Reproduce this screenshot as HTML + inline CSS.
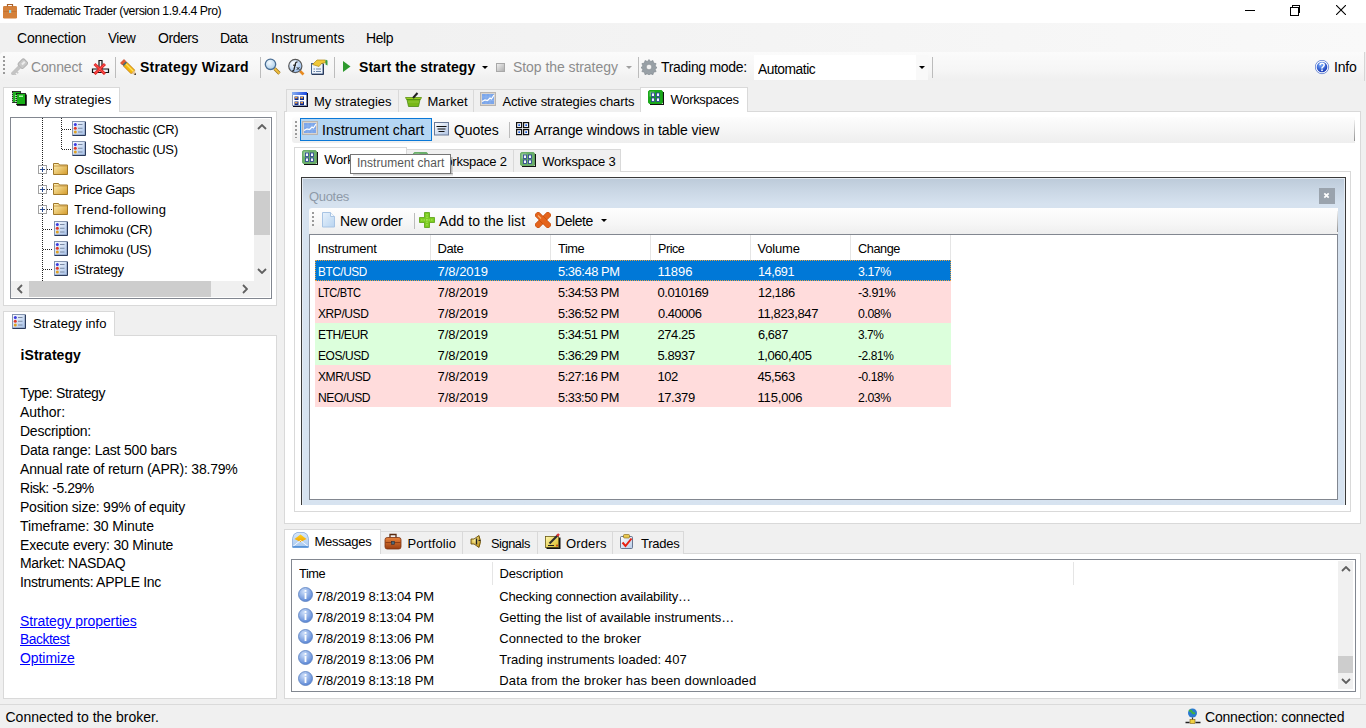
<!DOCTYPE html>
<html><head><meta charset="utf-8">
<style>
*{box-sizing:border-box;margin:0;padding:0}
html,body{width:1366px;height:728px;overflow:hidden;background:#f0f0f0;font-family:"Liberation Sans",sans-serif;color:#000}
.a{position:absolute}
.t{position:absolute;white-space:nowrap;font-size:14px;letter-spacing:-0.2px;line-height:20px}
.b{font-weight:bold;letter-spacing:-0.1px}
.g{color:#8d8d8d}
.w{color:#fff}
.pan{position:absolute;background:#fff;border:1px solid #d9d9d9}
.tab{position:absolute;background:#f0f0f0;border:1px solid #d9d9d9;border-bottom:none}
.tabA{position:absolute;background:#fff;border:1px solid #d9d9d9;border-bottom:none}
.sep{position:absolute;width:1px;background:#bcbcbc}
.grid{position:absolute;background:#fff;border:1px solid #828790}
.lnk{color:#0000ff;text-decoration:underline}
.grip{position:absolute;width:2px;background:repeating-linear-gradient(#9a9a9a 0 2px,transparent 2px 4px)}
</style></head><body>
<div class="a" style="left:0px;top:0px;width:1366px;height:23px;background:#fff"></div>
<svg class="a" style="left:3px;top:3px" width="15" height="16" viewBox="0 0 15 16"><rect x="0" y="3" width="14" height="12.5" rx="1.3" fill="#d4803a"/><path d="M4.5 3.5V1.5h5v2" stroke="#a8602a" stroke-width="1.2" fill="none"/><path d="M0.5 8.5h13" stroke="#b86a2a" stroke-width="0.8" opacity="0.7"/><rect x="6" y="7" width="2.2" height="3" fill="#9ad4e0"/></svg>
<div class="t" style="left:23.6px;top:1px;font-size:12.3px;letter-spacing:-0.45px;transform:scaleX(0.9995);transform-origin:0.0px 0;">Tradematic Trader (version 1.9.4.4 Pro)</div>
<div class="a" style="left:1245px;top:10px;width:10px;height:1px;background:#000"></div>
<div class="a" style="left:1292px;top:5px;width:8px;height:8px;border:1px solid #000"></div>
<div class="a" style="left:1290px;top:7px;width:9px;height:9px;border:1px solid #000;background:#fff"></div>
<svg class="a" style="left:1336px;top:5px" width="10" height="10" viewBox="0 0 10 10"><path d="M0 0L10 10M10 0L0 10" stroke="#000" stroke-width="1.1"/></svg>
<div class="a" style="left:0px;top:23px;width:1366px;height:29px;background:linear-gradient(90deg,#f0f0f0 0%,#f1f1f1 30%,#f9f9f9 100%)"></div>
<div class="t" style="left:17.0px;top:28px;font-size:14px;letter-spacing:-0.20px;">Connection</div>
<div class="t" style="left:108.0px;top:28px;font-size:14px;letter-spacing:-0.45px;transform:scaleX(0.9680);transform-origin:0.0px 0;">View</div>
<div class="t" style="left:158.0px;top:28px;font-size:14px;letter-spacing:-0.45px;transform:scaleX(0.9988);transform-origin:0.0px 0;">Orders</div>
<div class="t" style="left:220.0px;top:28px;font-size:14px;letter-spacing:-0.45px;transform:scaleX(0.9948);transform-origin:0.0px 0;">Data</div>
<div class="t" style="left:271.0px;top:28px;font-size:14px;letter-spacing:0.03px;">Instruments</div>
<div class="t" style="left:366.0px;top:28px;font-size:14px;letter-spacing:-0.40px;">Help</div>
<div class="a" style="left:0px;top:52px;width:1365px;height:29px;background:linear-gradient(#fbfbfb,#f6f6f6 60%,#efefef);border-radius:4px 0 0 4px"></div>
<div class="a" style="left:1364px;top:52px;width:1px;height:29px;background:#d6d6d6"></div>
<div class="grip" style="left:3px;top:56px;height:20px"></div>
<svg class="a" style="left:11px;top:58px" width="17" height="17" viewBox="0 0 17 17"><g transform="rotate(45 12 5.5)"><rect x="8.5" y="1.5" width="7" height="8.5" rx="2" fill="#c8c8c8" stroke="#b0b0b0"/><rect x="11" y="3" width="2" height="4" fill="#ececec"/><rect x="10.5" y="10" width="3" height="11" fill="#c4c4c4" stroke="#b4b4b4" stroke-width="0.6"/><rect x="13.5" y="15" width="2" height="1.6" fill="#c4c4c4"/><rect x="13.5" y="18" width="2" height="1.6" fill="#c4c4c4"/></g></svg>
<div class="t g" style="left:31.0px;top:57px;font-size:14px;letter-spacing:-0.17px;">Connect</div>
<svg class="a" style="left:91px;top:59px" width="19" height="16" viewBox="0 0 19 16"><path d="M1.5 10h16v3.5h-16z" fill="#e8eef2" stroke="#111" stroke-width="1.2"/><path d="M8 1.5h3v8.5h-3z" fill="#f4f4f4" stroke="#111" stroke-width="1.2"/><path d="M3.5 5L14 15M14 5L3.5 15" stroke="#e02828" stroke-width="3"/><path d="M4 5.5L13.5 14.5M13.5 5.5L4 14.5" stroke="#ff5a50" stroke-width="1"/></svg>
<div class="sep" style="left:115px;top:57px;height:21px"></div>
<svg class="a" style="left:119px;top:58px" width="18" height="18" viewBox="0 0 18 18"><path d="M7.8 4.2L4.2 7.8L12.2 15.8L15.8 12.2z" fill="#f2b80c" stroke="#c07000" stroke-width="0.8"/><path d="M6.5 5.5L14.5 13.5" stroke="#ffe060" stroke-width="1.2"/><path d="M5 1.5L1.5 5L3.5 7L7 3.5z" fill="#e85a30" stroke="#b83010" stroke-width="0.6"/><path d="M6.8 3.6L3.6 6.8L4.8 8L8 4.8z" fill="#4a6a70"/><path d="M12.2 15.8L17 17L15.8 12.2z" fill="#e8c898"/><path d="M15 16.5L17 17L16.5 15z" fill="#111"/></svg>
<div class="t b" style="left:140.0px;top:57px;font-size:14px;letter-spacing:0.21px;">Strategy Wizard</div>
<div class="sep" style="left:260px;top:57px;height:21px"></div>
<svg class="a" style="left:264px;top:58px" width="18" height="17" viewBox="0 0 18 17"><defs><radialGradient id="gm" cx="0.4" cy="0.35" r="0.7"><stop offset="0" stop-color="#f4faff"/><stop offset="1" stop-color="#a8cce8"/></radialGradient></defs><path d="M10.5 10.5L15.5 15.5" stroke="#9a7018" stroke-width="3.2"/><path d="M10.5 10.5L15.5 15.5" stroke="#f0c040" stroke-width="1.8"/><circle cx="6.5" cy="6.3" r="5.2" fill="url(#gm)" stroke="#4a6e94" stroke-width="1.3"/></svg>
<svg class="a" style="left:287px;top:58px" width="18" height="18" viewBox="0 0 18 18"><defs><radialGradient id="gx" cx="0.35" cy="0.3" r="0.8"><stop offset="0" stop-color="#ffffff"/><stop offset="1" stop-color="#8ab4ea"/></radialGradient></defs><path d="M13 13L16.5 16.5" stroke="#e88a20" stroke-width="2.6"/><circle cx="8.3" cy="8" r="6.6" fill="url(#gx)" stroke="#5a5a5a" stroke-width="1.2"/><path d="M10.5 4.2q-1.5-.6-2 1.2l-1.6 6.5q-.4 1.4-1.8 1" stroke="#222" stroke-width="1.3" fill="none"/><path d="M6 7.2h3" stroke="#222" stroke-width="1"/><path d="M9.8 9.2l2.6 2.6M12.4 9.2l-2.6 2.6" stroke="#222" stroke-width="1"/></svg>
<svg class="a" style="left:310px;top:58px" width="18" height="18" viewBox="0 0 18 18"><rect x="1.5" y="5.5" width="11.5" height="10.5" fill="#eef4fb" stroke="#45618a" stroke-width="1"/><path d="M2 16.5h11.5V6" stroke="#2a3a5a" stroke-width="1" fill="none"/><path d="M3.5 11h1.5M6 11h5M3.5 13.5h1.5M6 13.5h5" stroke="#7088aa" stroke-width="1"/><path d="M2.5 6.5L7 2h8l1 2.5l-4.5 1L9 8.5z" fill="#f0c838" stroke="#b08a18" stroke-width="0.7"/><path d="M15.5 1.5l2 1v5l-2-1z" fill="#3aa040"/></svg>
<div class="sep" style="left:334px;top:57px;height:21px"></div>
<svg class="a" style="left:343px;top:61px" width="8" height="12" viewBox="0 0 8 12"><path d="M0 0L7.5 5.5L0 11Z" fill="#2e9a2e"/></svg>
<div class="t b" style="left:359.0px;top:57px;font-size:14px;letter-spacing:0.06px;">Start the strategy</div>
<svg class="a" style="left:482px;top:66px" width="6" height="4" viewBox="0 0 6 4"><path d="M0 0h6L3 3Z" fill="#000"/></svg>
<div class="a" style="left:496px;top:63px;width:9px;height:9px;background:linear-gradient(135deg,#eee,#b0b0b0);border:1px solid #a8a8a8"></div>
<div class="t g" style="left:513.0px;top:57px;font-size:14px;letter-spacing:-0.06px;">Stop the strategy</div>
<svg class="a" style="left:626px;top:66px" width="6" height="4" viewBox="0 0 6 4"><path d="M0 0h6L3 3Z" fill="#a0a0a0"/></svg>
<div class="sep" style="left:638px;top:57px;height:21px"></div>
<svg class="a" style="left:641px;top:59px" width="16" height="16" viewBox="0 0 16 16"><path d="M8 0.5l1.6 2 2.4-1 .6 2.5 2.5.6-1 2.4 2 1.6-2 1.6 1 2.4-2.5.6-.6 2.5-2.4-1-1.6 2-1.6-2-2.4 1-.6-2.5-2.5-.6 1-2.4-2-1.6 2-1.6-1-2.4 2.5-.6.6-2.5 2.4 1z" fill="#98a0a6" stroke="#7d858b" stroke-width="0.6"/><circle cx="8" cy="8" r="2.8" fill="#f2f2f2" stroke="#7d858b" stroke-width="0.6"/></svg>
<div class="t" style="left:661.0px;top:57px;font-size:14px;letter-spacing:-0.30px;">Trading mode:</div>
<div class="a" style="left:754px;top:55px;width:174px;height:25px;background:#fff"></div>
<div class="a" style="left:916px;top:55px;width:12px;height:25px;background:#f9f9f9"></div>
<svg class="a" style="left:919px;top:66px" width="6" height="4" viewBox="0 0 6 4"><path d="M0 0h6L3 3Z" fill="#000"/></svg>
<div class="t" style="left:758.0px;top:59px;font-size:14px;letter-spacing:-0.45px;transform:scaleX(0.9846);transform-origin:0.0px 0;">Automatic</div>
<div class="sep" style="left:932px;top:57px;height:21px"></div>
<svg class="a" style="left:1315px;top:60px" width="15" height="15" viewBox="0 0 15 15"><defs><radialGradient id="gq2" cx="0.4" cy="0.3" r="0.75"><stop offset="0" stop-color="#7ab0ff"/><stop offset="1" stop-color="#1030b0"/></radialGradient></defs><circle cx="7" cy="7" r="6.7" fill="#fff" stroke="#3a62c8" stroke-width="0.7"/><circle cx="7" cy="7" r="5.3" fill="url(#gq2)"/><path d="M5 5.2q0-2 2.1-2t2.1 1.9q0 1.1-1.2 1.7t-1 1.8" stroke="#fff" stroke-width="1.5" fill="none"/><rect x="6.2" y="9.5" width="1.6" height="1.6" fill="#fff"/></svg>
<div class="t" style="left:1334.0px;top:57px;font-size:14px;letter-spacing:-0.23px;">Info</div>
<div class="pan" style="left:3px;top:111px;width:274px;height:195px"></div>
<div class="tabA" style="left:3px;top:87px;width:117px;height:25px"></div>
<svg class="a" style="left:11px;top:91px" width="16" height="15" viewBox="0 0 16 15"><rect x="1.5" y="0.5" width="8" height="11" fill="#22b022" stroke="#111" stroke-width="0.8"/><rect x="5.5" y="2.5" width="9" height="11" fill="#18b018" stroke="#111" stroke-width="0.8"/><path d="M15 3.5v10.5h-9" stroke="#000" stroke-width="1.5" fill="none"/><path d="M1 2v9M5 4v9" stroke="#fff" stroke-width="1.2" stroke-dasharray="1 1"/><rect x="8" y="4.5" width="4" height="1.5" fill="#a8f0a8"/></svg>
<div class="t" style="left:33.6px;top:90px;font-size:13px;letter-spacing:0.02px;">My strategies</div>
<div class="grid" style="left:10px;top:117px;width:262px;height:182px"></div>
<div class="a" style="left:42px;top:118px;width:1px;height:163px;background:repeating-linear-gradient(#222 0 1px,transparent 1px 2px)"></div>
<div class="a" style="left:61px;top:118px;width:1px;height:32px;background:repeating-linear-gradient(#222 0 1px,transparent 1px 2px)"></div>
<div class="a" style="left:62px;top:129px;width:10px;height:1px;background:repeating-linear-gradient(90deg,#222 0 1px,transparent 1px 2px)"></div>
<div class="a" style="left:62px;top:149px;width:10px;height:1px;background:repeating-linear-gradient(90deg,#222 0 1px,transparent 1px 2px)"></div>
<div class="a" style="left:47px;top:169px;width:6px;height:1px;background:repeating-linear-gradient(90deg,#222 0 1px,transparent 1px 2px)"></div>
<div class="a" style="left:47px;top:189px;width:6px;height:1px;background:repeating-linear-gradient(90deg,#222 0 1px,transparent 1px 2px)"></div>
<div class="a" style="left:47px;top:209px;width:6px;height:1px;background:repeating-linear-gradient(90deg,#222 0 1px,transparent 1px 2px)"></div>
<div class="a" style="left:43px;top:229px;width:10px;height:1px;background:repeating-linear-gradient(90deg,#222 0 1px,transparent 1px 2px)"></div>
<div class="a" style="left:43px;top:249px;width:10px;height:1px;background:repeating-linear-gradient(90deg,#222 0 1px,transparent 1px 2px)"></div>
<div class="a" style="left:43px;top:269px;width:10px;height:1px;background:repeating-linear-gradient(90deg,#222 0 1px,transparent 1px 2px)"></div>
<svg class="a" style="left:38px;top:165px" width="9" height="9" viewBox="0 0 9 9"><rect x="0.5" y="0.5" width="8" height="8" fill="#fff" stroke="#a0a0a0"/><path d="M2 4.5h5M4.5 2v5" stroke="#2a4a8a" stroke-width="1"/></svg>
<svg class="a" style="left:53px;top:162px" width="16" height="13" viewBox="0 0 16 13"><defs><linearGradient id="gf" x1="0" y1="0" x2="1" y2="1"><stop offset="0" stop-color="#fff2b8"/><stop offset="1" stop-color="#d49a28"/></linearGradient></defs><path d="M0.5 1.5h5l1 1.5h8v9.5h-14z" fill="url(#gf)" stroke="#a0782a" stroke-width="1"/><path d="M0.5 4h14" stroke="#c09040" stroke-width="0.8"/></svg>
<svg class="a" style="left:38px;top:185px" width="9" height="9" viewBox="0 0 9 9"><rect x="0.5" y="0.5" width="8" height="8" fill="#fff" stroke="#a0a0a0"/><path d="M2 4.5h5M4.5 2v5" stroke="#2a4a8a" stroke-width="1"/></svg>
<svg class="a" style="left:53px;top:182px" width="16" height="13" viewBox="0 0 16 13"><defs><linearGradient id="gf" x1="0" y1="0" x2="1" y2="1"><stop offset="0" stop-color="#fff2b8"/><stop offset="1" stop-color="#d49a28"/></linearGradient></defs><path d="M0.5 1.5h5l1 1.5h8v9.5h-14z" fill="url(#gf)" stroke="#a0782a" stroke-width="1"/><path d="M0.5 4h14" stroke="#c09040" stroke-width="0.8"/></svg>
<svg class="a" style="left:38px;top:205px" width="9" height="9" viewBox="0 0 9 9"><rect x="0.5" y="0.5" width="8" height="8" fill="#fff" stroke="#a0a0a0"/><path d="M2 4.5h5M4.5 2v5" stroke="#2a4a8a" stroke-width="1"/></svg>
<svg class="a" style="left:53px;top:202px" width="16" height="13" viewBox="0 0 16 13"><defs><linearGradient id="gf" x1="0" y1="0" x2="1" y2="1"><stop offset="0" stop-color="#fff2b8"/><stop offset="1" stop-color="#d49a28"/></linearGradient></defs><path d="M0.5 1.5h5l1 1.5h8v9.5h-14z" fill="url(#gf)" stroke="#a0782a" stroke-width="1"/><path d="M0.5 4h14" stroke="#c09040" stroke-width="0.8"/></svg>
<svg class="a" style="left:72px;top:121px" width="14" height="15" viewBox="0 0 14 15"><defs><linearGradient id="gs" x1="0" y1="0" x2="1" y2="1"><stop offset="0" stop-color="#fff"/><stop offset="1" stop-color="#a4bfe8"/></linearGradient></defs><rect x="0.5" y="0.5" width="12.5" height="13.5" fill="url(#gs)" stroke="#8494b0"/><path d="M0.5 14.5H13.5V0.8" stroke="#2a3a5c" stroke-width="1" fill="none"/><circle cx="3.3" cy="3.5" r="1.5" fill="#3a3ae0"/><circle cx="3.3" cy="7.3" r="1.5" fill="#e03a2a"/><circle cx="3.3" cy="11" r="1.5" fill="#e0a020"/><path d="M6 3.5h4.5M6 7.3h4.5M6 11h4.5" stroke="#7a8aa4" stroke-width="1.1"/></svg>
<svg class="a" style="left:72px;top:141px" width="14" height="15" viewBox="0 0 14 15"><defs><linearGradient id="gs" x1="0" y1="0" x2="1" y2="1"><stop offset="0" stop-color="#fff"/><stop offset="1" stop-color="#a4bfe8"/></linearGradient></defs><rect x="0.5" y="0.5" width="12.5" height="13.5" fill="url(#gs)" stroke="#8494b0"/><path d="M0.5 14.5H13.5V0.8" stroke="#2a3a5c" stroke-width="1" fill="none"/><circle cx="3.3" cy="3.5" r="1.5" fill="#3a3ae0"/><circle cx="3.3" cy="7.3" r="1.5" fill="#e03a2a"/><circle cx="3.3" cy="11" r="1.5" fill="#e0a020"/><path d="M6 3.5h4.5M6 7.3h4.5M6 11h4.5" stroke="#7a8aa4" stroke-width="1.1"/></svg>
<svg class="a" style="left:54px;top:221px" width="14" height="15" viewBox="0 0 14 15"><defs><linearGradient id="gs" x1="0" y1="0" x2="1" y2="1"><stop offset="0" stop-color="#fff"/><stop offset="1" stop-color="#a4bfe8"/></linearGradient></defs><rect x="0.5" y="0.5" width="12.5" height="13.5" fill="url(#gs)" stroke="#8494b0"/><path d="M0.5 14.5H13.5V0.8" stroke="#2a3a5c" stroke-width="1" fill="none"/><circle cx="3.3" cy="3.5" r="1.5" fill="#3a3ae0"/><circle cx="3.3" cy="7.3" r="1.5" fill="#e03a2a"/><circle cx="3.3" cy="11" r="1.5" fill="#e0a020"/><path d="M6 3.5h4.5M6 7.3h4.5M6 11h4.5" stroke="#7a8aa4" stroke-width="1.1"/></svg>
<svg class="a" style="left:54px;top:241px" width="14" height="15" viewBox="0 0 14 15"><defs><linearGradient id="gs" x1="0" y1="0" x2="1" y2="1"><stop offset="0" stop-color="#fff"/><stop offset="1" stop-color="#a4bfe8"/></linearGradient></defs><rect x="0.5" y="0.5" width="12.5" height="13.5" fill="url(#gs)" stroke="#8494b0"/><path d="M0.5 14.5H13.5V0.8" stroke="#2a3a5c" stroke-width="1" fill="none"/><circle cx="3.3" cy="3.5" r="1.5" fill="#3a3ae0"/><circle cx="3.3" cy="7.3" r="1.5" fill="#e03a2a"/><circle cx="3.3" cy="11" r="1.5" fill="#e0a020"/><path d="M6 3.5h4.5M6 7.3h4.5M6 11h4.5" stroke="#7a8aa4" stroke-width="1.1"/></svg>
<svg class="a" style="left:54px;top:261px" width="14" height="15" viewBox="0 0 14 15"><defs><linearGradient id="gs" x1="0" y1="0" x2="1" y2="1"><stop offset="0" stop-color="#fff"/><stop offset="1" stop-color="#a4bfe8"/></linearGradient></defs><rect x="0.5" y="0.5" width="12.5" height="13.5" fill="url(#gs)" stroke="#8494b0"/><path d="M0.5 14.5H13.5V0.8" stroke="#2a3a5c" stroke-width="1" fill="none"/><circle cx="3.3" cy="3.5" r="1.5" fill="#3a3ae0"/><circle cx="3.3" cy="7.3" r="1.5" fill="#e03a2a"/><circle cx="3.3" cy="11" r="1.5" fill="#e0a020"/><path d="M6 3.5h4.5M6 7.3h4.5M6 11h4.5" stroke="#7a8aa4" stroke-width="1.1"/></svg>
<div class="t" style="left:93.0px;top:120px;font-size:13px;letter-spacing:-0.38px;">Stochastic (CR)</div>
<div class="t" style="left:93.0px;top:140px;font-size:13px;letter-spacing:-0.38px;">Stochastic (US)</div>
<div class="t" style="left:74.3px;top:160px;font-size:13px;letter-spacing:-0.06px;">Oscillators</div>
<div class="t" style="left:74.3px;top:180px;font-size:13px;letter-spacing:-0.39px;">Price Gaps</div>
<div class="t" style="left:74.3px;top:200px;font-size:13px;letter-spacing:0.23px;">Trend-following</div>
<div class="t" style="left:74.3px;top:220px;font-size:13px;letter-spacing:-0.42px;">Ichimoku (CR)</div>
<div class="t" style="left:74.3px;top:240px;font-size:13px;letter-spacing:-0.42px;">Ichimoku (US)</div>
<div class="t" style="left:74.3px;top:260px;font-size:13px;letter-spacing:-0.19px;">iStrategy</div>
<div class="a" style="left:254px;top:119px;width:16px;height:162px;background:#f0f0f0"></div>
<div class="a" style="left:254px;top:191px;width:16px;height:44px;background:#cdcdcd"></div>
<div class="a" style="left:11px;top:281px;width:259px;height:16px;background:#f0f0f0"></div>
<div class="a" style="left:29px;top:281px;width:182px;height:16px;background:#cdcdcd"></div>
<svg class="a" style="left:257px;top:124px" width="10" height="6" viewBox="0 0 10 6"><path d="M1 5L5 1L9 5" stroke="#606060" stroke-width="1.8" fill="none"/></svg>
<svg class="a" style="left:257px;top:268px" width="10" height="6" viewBox="0 0 10 6"><path d="M1 1L5 5L9 1" stroke="#606060" stroke-width="1.8" fill="none"/></svg>
<svg class="a" style="left:17px;top:284px" width="6" height="10" viewBox="0 0 6 10"><path d="M5 1L1 5L5 9" stroke="#606060" stroke-width="1.8" fill="none"/></svg>
<svg class="a" style="left:242px;top:284px" width="6" height="10" viewBox="0 0 6 10"><path d="M1 1L5 5L1 9" stroke="#606060" stroke-width="1.8" fill="none"/></svg>
<div class="pan" style="left:3px;top:335px;width:274px;height:364px"></div>
<div class="tabA" style="left:3px;top:311px;width:112px;height:25px"></div>
<svg class="a" style="left:12px;top:314px" width="14" height="15" viewBox="0 0 14 15"><defs><linearGradient id="gs" x1="0" y1="0" x2="1" y2="1"><stop offset="0" stop-color="#fff"/><stop offset="1" stop-color="#a4bfe8"/></linearGradient></defs><rect x="0.5" y="0.5" width="12.5" height="13.5" fill="url(#gs)" stroke="#8494b0"/><path d="M0.5 14.5H13.5V0.8" stroke="#2a3a5c" stroke-width="1" fill="none"/><circle cx="3.3" cy="3.5" r="1.5" fill="#3a3ae0"/><circle cx="3.3" cy="7.3" r="1.5" fill="#e03a2a"/><circle cx="3.3" cy="11" r="1.5" fill="#e0a020"/><path d="M6 3.5h4.5M6 7.3h4.5M6 11h4.5" stroke="#7a8aa4" stroke-width="1.1"/></svg>
<div class="t" style="left:33.0px;top:314px;font-size:13px;letter-spacing:0.04px;">Strategy info</div>
<div class="t b" style="left:20.6px;top:345px;font-size:14px;letter-spacing:0.04px;">iStrategy</div>
<div class="t" style="left:20.0px;top:383px;font-size:14px;letter-spacing:-0.37px;">Type: Strategy</div>
<div class="t" style="left:20.0px;top:402px;font-size:14px;letter-spacing:-0.02px;">Author:</div>
<div class="t" style="left:20.0px;top:421px;font-size:14px;letter-spacing:-0.25px;">Description:</div>
<div class="t" style="left:20.0px;top:440px;font-size:14px;letter-spacing:-0.20px;">Data range: Last 500 bars</div>
<div class="t" style="left:20.0px;top:459px;font-size:14px;letter-spacing:-0.21px;">Annual rate of return (APR): 38.79%</div>
<div class="t" style="left:20.0px;top:478px;font-size:14px;letter-spacing:-0.45px;transform:scaleX(0.9980);transform-origin:0.0px 0;">Risk: -5.29%</div>
<div class="t" style="left:20.0px;top:497px;font-size:14px;letter-spacing:-0.22px;">Position size: 99% of equity</div>
<div class="t" style="left:20.0px;top:516px;font-size:14px;letter-spacing:-0.09px;">Timeframe: 30 Minute</div>
<div class="t" style="left:20.0px;top:535px;font-size:14px;letter-spacing:-0.20px;">Execute every: 30 Minute</div>
<div class="t" style="left:20.0px;top:553px;font-size:14px;letter-spacing:-0.31px;">Market: NASDAQ</div>
<div class="t" style="left:20.0px;top:572px;font-size:14px;letter-spacing:-0.31px;">Instruments: APPLE Inc</div>
<div class="t lnk" style="left:20.0px;top:611px;font-size:14px;letter-spacing:-0.09px;">Strategy properties</div>
<div class="t lnk" style="left:20.0px;top:629px;font-size:14px;letter-spacing:-0.45px;transform:scaleX(0.9872);transform-origin:0.0px 0;">Backtest</div>
<div class="t lnk" style="left:20.0px;top:648px;font-size:14px;letter-spacing:-0.07px;">Optimize</div>
<div class="pan" style="left:284px;top:111px;width:1077px;height:413px"></div>
<div class="tab" style="left:286px;top:89px;width:113px;height:23px"></div>
<div class="tab" style="left:398px;top:89px;width:76px;height:23px"></div>
<div class="tab" style="left:473px;top:89px;width:168px;height:23px"></div>
<div class="tabA" style="left:640px;top:87px;width:108px;height:25px"></div>
<svg class="a" style="left:292px;top:92px" width="16" height="15" viewBox="0 0 16 15"><defs><linearGradient id="gt" x1="0" x2="1"><stop offset="0" stop-color="#8ab0f0"/><stop offset="1" stop-color="#1a48e0"/></linearGradient></defs><rect x="0.5" y="0.5" width="14" height="13" fill="#fff" stroke="#8a9ab8"/><rect x="0" y="0" width="15" height="3" fill="url(#gt)"/><path d="M1 14.5h14.5V1" stroke="#0a0a20" stroke-width="1.2" fill="none"/><rect x="2.5" y="4.5" width="4" height="3.5" fill="#0a2a90"/><rect x="8" y="4.5" width="4" height="3.5" fill="#0a2a90"/><rect x="2.5" y="9.5" width="4" height="3.5" fill="#0a2a90"/><rect x="8" y="9.5" width="4" height="3.5" fill="#0a2a90"/><rect x="3" y="5" width="2.5" height="1.5" fill="#f0a040"/><rect x="8.5" y="5" width="2.5" height="1.5" fill="#f0a040"/><rect x="3" y="10" width="2.5" height="1.5" fill="#f0a040"/><rect x="8.5" y="10" width="2.5" height="1.5" fill="#f0a040"/></svg>
<div class="t" style="left:314.0px;top:92px;font-size:13px;letter-spacing:0.02px;">My strategies</div>
<svg class="a" style="left:405px;top:92px" width="17" height="15" viewBox="0 0 17 15"><path d="M0.5 5.5h16l-1 2h-14z" fill="#9ad020" stroke="#5a9010" stroke-width="0.8"/><path d="M2 7.5h13l-1.5 7h-10z" fill="#78b818" stroke="#4a8a10" stroke-width="0.8"/><path d="M3 10h11" stroke="#9ad040" stroke-width="0.8"/><path d="M8 6L12.5 1" stroke="#222" stroke-width="2"/></svg>
<div class="t" style="left:427.4px;top:92px;font-size:13px;letter-spacing:0.12px;">Market</div>
<svg class="a" style="left:480px;top:92px" width="16" height="14" viewBox="0 0 16 14"><rect x="0.5" y="0.5" width="15" height="13" fill="#d8d4d0" stroke="#b8b4b0"/><rect x="2" y="2" width="12" height="10" fill="#7ca6ea"/><path d="M2 5h12M2 8.5h12M6 2v10M10 2v10" stroke="#93b8f0" stroke-width="0.7"/><path d="M2 9.5L5 8L7.5 8.5L10 6L11.5 7L14 3" stroke="#fff" stroke-width="1.2" fill="none"/></svg>
<div class="t" style="left:502.4px;top:92px;font-size:13px;letter-spacing:-0.10px;">Active strategies charts</div>
<svg class="a" style="left:648px;top:90px" width="16" height="15" viewBox="0 0 16 15"><rect x="0.5" y="0.5" width="14" height="13" rx="1.5" fill="#1aa81a" stroke="#1aa81a"/><path d="M2 14.5h13.5V2" stroke="#111" stroke-width="1.2" fill="none"/><rect x="1.5" y="1.5" width="5" height="5" fill="#8fe08f" opacity="0.6"/><rect x="3.5" y="3" width="3" height="3.5" fill="#f4f6ff" stroke="#223a90" stroke-width="0.8"/><rect x="8.5" y="3" width="3" height="3.5" fill="#f4f6ff" stroke="#223a90" stroke-width="0.8"/><rect x="3.5" y="8" width="3" height="3.5" fill="#f4f6ff" stroke="#223a90" stroke-width="0.8"/><rect x="8.5" y="8" width="3" height="3.5" fill="#f4f6ff" stroke="#223a90" stroke-width="0.8"/></svg>
<div class="t" style="left:670.6px;top:90px;font-size:13px;letter-spacing:-0.33px;">Workspaces</div>
<div class="a" style="left:292px;top:117px;width:1063px;height:26px;background:linear-gradient(#fdfdfd,#f4f4f4 60%,#eeeeee);border-radius:3px 0 0 3px"></div>
<div class="a" style="left:1354px;top:120px;width:1px;height:21px;background:linear-gradient(#f0f0f0,#909090)"></div>
<div class="grip" style="left:295px;top:121px;height:17px"></div>
<div class="a" style="left:300px;top:118px;width:132px;height:23px;background:#b5d6f3;border:1px solid #0a78d7"></div>
<svg class="a" style="left:302px;top:121px" width="16" height="14" viewBox="0 0 16 14"><rect x="0.5" y="0.5" width="15" height="13" fill="#d8d4d0" stroke="#b8b4b0"/><rect x="2" y="2" width="12" height="10" fill="#7ca6ea"/><path d="M2 5h12M2 8.5h12M6 2v10M10 2v10" stroke="#93b8f0" stroke-width="0.7"/><path d="M2 9.5L5 8L7.5 8.5L10 6L11.5 7L14 3" stroke="#fff" stroke-width="1.2" fill="none"/></svg>
<div class="t" style="left:322.0px;top:120px;font-size:14px;letter-spacing:0.07px;">Instrument chart</div>
<svg class="a" style="left:434px;top:122px" width="15" height="14" viewBox="0 0 15 14"><defs><linearGradient id="gq" x1="0" y1="0" x2="1" y2="1"><stop offset="0" stop-color="#fff"/><stop offset="1" stop-color="#b0c4e4"/></linearGradient></defs><rect x="0.5" y="0.5" width="14" height="12.5" fill="url(#gq)" stroke="#6a7a98"/><path d="M2.5 4.5h10M3.5 7h8M4.5 9.5h6" stroke="#111" stroke-width="1.2"/></svg>
<div class="t" style="left:454.0px;top:120px;font-size:14px;letter-spacing:-0.10px;">Quotes</div>
<div class="sep" style="left:509px;top:122px;height:16px"></div>
<svg class="a" style="left:516px;top:122px" width="14" height="14" viewBox="0 0 14 14"><g fill="#fff" stroke="#111" stroke-width="1.2"><rect x="0.6" y="0.6" width="5" height="5"/><rect x="7.6" y="0.6" width="5" height="5"/><rect x="0.6" y="7.6" width="5" height="5"/><rect x="7.6" y="7.6" width="5" height="5"/></g><g fill="#2060e0"><rect x="2.3" y="2.3" width="1.8" height="1.8"/><rect x="9.3" y="2.3" width="1.8" height="1.8"/><rect x="2.3" y="9.3" width="1.8" height="1.8"/><rect x="9.3" y="9.3" width="1.8" height="1.8"/></g></svg>
<div class="t" style="left:534.0px;top:120px;font-size:14px;letter-spacing:-0.11px;">Arrange windows in table view</div>
<div class="pan" style="left:294px;top:171px;width:1057px;height:341px"></div>
<div class="tab" style="left:406px;top:149px;width:108px;height:23px"></div>
<div class="tab" style="left:513px;top:149px;width:108px;height:23px"></div>
<div class="tabA" style="left:294px;top:147px;width:113px;height:25px"></div>
<svg class="a" style="left:302px;top:150px" width="16" height="15" viewBox="0 0 16 15"><rect x="0.5" y="0.5" width="14" height="13" rx="1.5" fill="#6aae6a" stroke="#6aae6a"/><path d="M2 14.5h13.5V2" stroke="#111" stroke-width="1.2" fill="none"/><rect x="1.5" y="1.5" width="5" height="5" fill="#b8deb8" opacity="0.6"/><rect x="3.5" y="3" width="3" height="3.5" fill="#f4f6ff" stroke="#223a90" stroke-width="0.8"/><rect x="8.5" y="3" width="3" height="3.5" fill="#f4f6ff" stroke="#223a90" stroke-width="0.8"/><rect x="3.5" y="8" width="3" height="3.5" fill="#f4f6ff" stroke="#223a90" stroke-width="0.8"/><rect x="8.5" y="8" width="3" height="3.5" fill="#f4f6ff" stroke="#223a90" stroke-width="0.8"/></svg>
<div class="t" style="left:324.3px;top:150px;font-size:13px;letter-spacing:-0.22px;">Workspace 1</div>
<svg class="a" style="left:413px;top:152px" width="16" height="15" viewBox="0 0 16 15"><rect x="0.5" y="0.5" width="14" height="13" rx="1.5" fill="#6aae6a" stroke="#6aae6a"/><path d="M2 14.5h13.5V2" stroke="#111" stroke-width="1.2" fill="none"/><rect x="1.5" y="1.5" width="5" height="5" fill="#b8deb8" opacity="0.6"/><rect x="3.5" y="3" width="3" height="3.5" fill="#f4f6ff" stroke="#223a90" stroke-width="0.8"/><rect x="8.5" y="3" width="3" height="3.5" fill="#f4f6ff" stroke="#223a90" stroke-width="0.8"/><rect x="3.5" y="8" width="3" height="3.5" fill="#f4f6ff" stroke="#223a90" stroke-width="0.8"/><rect x="8.5" y="8" width="3" height="3.5" fill="#f4f6ff" stroke="#223a90" stroke-width="0.8"/></svg>
<div class="t" style="left:433.5px;top:152px;font-size:13px;letter-spacing:-0.22px;">Workspace 2</div>
<svg class="a" style="left:520px;top:152px" width="16" height="15" viewBox="0 0 16 15"><rect x="0.5" y="0.5" width="14" height="13" rx="1.5" fill="#6aae6a" stroke="#6aae6a"/><path d="M2 14.5h13.5V2" stroke="#111" stroke-width="1.2" fill="none"/><rect x="1.5" y="1.5" width="5" height="5" fill="#b8deb8" opacity="0.6"/><rect x="3.5" y="3" width="3" height="3.5" fill="#f4f6ff" stroke="#223a90" stroke-width="0.8"/><rect x="8.5" y="3" width="3" height="3.5" fill="#f4f6ff" stroke="#223a90" stroke-width="0.8"/><rect x="3.5" y="8" width="3" height="3.5" fill="#f4f6ff" stroke="#223a90" stroke-width="0.8"/><rect x="8.5" y="8" width="3" height="3.5" fill="#f4f6ff" stroke="#223a90" stroke-width="0.8"/></svg>
<div class="t" style="left:542.2px;top:152px;font-size:13px;letter-spacing:-0.22px;">Workspace 3</div>
<div class="a" style="left:301px;top:177px;width:1045px;height:328px;border:1px solid #3a3a3a;border-bottom:none;background:linear-gradient(#bccad9 0px,#c9d6e4 12px,#d6e2ef 26px,#d7e3f0)"></div>
<div class="a" style="left:302px;top:178px;width:1043px;height:1px;background:#e4ebf3"></div>
<div class="a" style="left:302px;top:178px;width:1px;height:327px;background:#e4ebf3"></div>
<div class="a" style="left:1344px;top:178px;width:1px;height:327px;background:#e4ebf3"></div>
<div class="t" style="left:309.0px;top:187px;font-size:13px;letter-spacing:-0.32px;color:#8e9aa8">Quotes</div>
<div class="a" style="left:1319px;top:188px;width:16px;height:16px;background:#9aa3ad"></div>
<svg class="a" style="left:1323px;top:192px" width="7" height="7" viewBox="0 0 7 7"><path d="M1.3 1.3L5.7 5.7M5.7 1.3L1.3 5.7" stroke="#fff" stroke-width="1.7"/></svg>
<div class="a" style="left:309px;top:208px;width:1029px;height:26px;background:linear-gradient(#fefefe,#f6f6f6 60%,#eeeeee);border-radius:3px 0 0 0"></div>
<div class="a" style="left:1337px;top:211px;width:1px;height:21px;background:linear-gradient(#f0f0f0,#909090)"></div>
<div class="grip" style="left:312px;top:212px;height:16px"></div>
<svg class="a" style="left:321px;top:212px" width="15" height="16" viewBox="0 0 15 16"><defs><linearGradient id="gd" x1="0" y1="0" x2="1" y2="1"><stop offset="0" stop-color="#e8f2fc"/><stop offset="1" stop-color="#b8d4f0"/></linearGradient></defs><path d="M1.5 0.5h8l4 4v10.5h-12z" fill="url(#gd)" stroke="#a8c4e4"/><path d="M9.5 0.5v4h4" fill="#f4f8fc" stroke="#a8c4e4"/></svg>
<div class="t" style="left:340.0px;top:211px;font-size:14px;letter-spacing:-0.23px;">New order</div>
<div class="sep" style="left:414px;top:213px;height:16px"></div>
<svg class="a" style="left:419px;top:212px" width="16" height="16" viewBox="0 0 16 16"><path d="M5.5 0.5h5v5h5v5h-5v5h-5v-5h-5v-5h5z" fill="#7ccc20" stroke="#58a010" stroke-width="0.8"/><path d="M8 2v12M2 8h12" stroke="#b8f070" stroke-width="0.8" stroke-dasharray="1.5 1"/></svg>
<div class="t" style="left:439.0px;top:211px;font-size:14px;letter-spacing:0.09px;">Add to the list</div>
<svg class="a" style="left:535px;top:212px" width="16" height="16" viewBox="0 0 16 16"><defs><linearGradient id="gdx" x1="0" y1="0" x2="0" y2="1"><stop offset="0" stop-color="#f8a050"/><stop offset="1" stop-color="#d04808"/></linearGradient></defs><g transform="rotate(45 8 8)" fill="#e4641c" stroke="#b84000" stroke-width="0.6"><rect x="5.3" y="-1.5" width="5.4" height="19" rx="1.2"/><rect x="-1.5" y="5.3" width="19" height="5.4" rx="1.2"/></g><g transform="rotate(45 8 8)" fill="#e4641c"><rect x="5.6" y="5.6" width="4.8" height="4.8"/></g><path d="M3 3.5L6 6.5" stroke="#f8b070" stroke-width="1.2"/></svg>
<div class="t" style="left:555.0px;top:211px;font-size:14px;letter-spacing:-0.45px;transform:scaleX(0.9987);transform-origin:0.0px 0;">Delete</div>
<svg class="a" style="left:601px;top:219px" width="6" height="4" viewBox="0 0 6 4"><path d="M0 0h6L3 3Z" fill="#000"/></svg>
<div class="grid" style="left:309px;top:234px;width:1029px;height:266px"></div>
<div class="a" style="left:430px;top:235px;width:1px;height:25px;background:#e5e5e5"></div>
<div class="a" style="left:550px;top:235px;width:1px;height:25px;background:#e5e5e5"></div>
<div class="a" style="left:650px;top:235px;width:1px;height:25px;background:#e5e5e5"></div>
<div class="a" style="left:750px;top:235px;width:1px;height:25px;background:#e5e5e5"></div>
<div class="a" style="left:850px;top:235px;width:1px;height:25px;background:#e5e5e5"></div>
<div class="a" style="left:950px;top:235px;width:1px;height:25px;background:#e5e5e5"></div>
<div class="t" style="left:317.5px;top:239px;font-size:13px;letter-spacing:-0.23px;">Instrument</div>
<div class="t" style="left:437.5px;top:239px;font-size:13px;letter-spacing:-0.40px;">Date</div>
<div class="t" style="left:557.5px;top:239px;font-size:13px;letter-spacing:-0.45px;transform:scaleX(0.9831);transform-origin:0.0px 0;">Time</div>
<div class="t" style="left:657.5px;top:239px;font-size:13px;letter-spacing:-0.45px;transform:scaleX(0.9645);transform-origin:0.0px 0;">Price</div>
<div class="t" style="left:757.5px;top:239px;font-size:13px;letter-spacing:-0.18px;">Volume</div>
<div class="t" style="left:857.5px;top:239px;font-size:13px;letter-spacing:-0.45px;transform:scaleX(0.9783);transform-origin:0.0px 0;">Change</div>
<div class="a" style="left:315px;top:260px;width:636px;height:21px;background:#0078d7"></div>
<div class="a" style="left:315px;top:260px;width:636px;height:21px;border:1px dotted #e8a040"></div>
<div class="t w" style="left:317.5px;top:262px;font-size:13px;letter-spacing:-0.45px;transform:scaleX(0.9061);transform-origin:0.0px 0;">BTC/USD</div>
<div class="t w" style="left:437.5px;top:262px;font-size:13px;letter-spacing:-0.01px;">7/8/2019</div>
<div class="t w" style="left:557.5px;top:262px;font-size:13px;letter-spacing:-0.45px;transform:scaleX(0.9929);transform-origin:0.0px 0;">5:36:48 PM</div>
<div class="t w" style="left:657.5px;top:262px;font-size:13px;letter-spacing:-0.07px;">11896</div>
<div class="t w" style="left:757.5px;top:262px;font-size:13px;letter-spacing:-0.45px;transform:scaleX(0.9722);transform-origin:0.0px 0;">14,691</div>
<div class="t w" style="left:857.5px;top:262px;font-size:13px;letter-spacing:-0.45px;transform:scaleX(0.9489);transform-origin:0.0px 0;">3.17%</div>
<div class="a" style="left:315px;top:281px;width:636px;height:21px;background:#ffdcdc"></div>
<div class="t" style="left:317.5px;top:283px;font-size:13px;letter-spacing:-0.45px;transform:scaleX(0.8529);transform-origin:0.0px 0;">LTC/BTC</div>
<div class="t" style="left:437.5px;top:283px;font-size:13px;letter-spacing:-0.01px;">7/8/2019</div>
<div class="t" style="left:557.5px;top:283px;font-size:13px;letter-spacing:-0.45px;transform:scaleX(0.9816);transform-origin:0.0px 0;">5:34:53 PM</div>
<div class="t" style="left:657.5px;top:283px;font-size:13px;letter-spacing:-0.43px;">0.010169</div>
<div class="t" style="left:757.5px;top:283px;font-size:13px;letter-spacing:-0.45px;transform:scaleX(0.9907);transform-origin:0.0px 0;">12,186</div>
<div class="t" style="left:857.5px;top:283px;font-size:13px;letter-spacing:-0.45px;transform:scaleX(0.9711);transform-origin:0.0px 0;">-3.91%</div>
<div class="a" style="left:315px;top:302px;width:636px;height:21px;background:#ffdcdc"></div>
<div class="t" style="left:317.5px;top:304px;font-size:13px;letter-spacing:-0.45px;transform:scaleX(0.9222);transform-origin:0.0px 0;">XRP/USD</div>
<div class="t" style="left:437.5px;top:304px;font-size:13px;letter-spacing:-0.01px;">7/8/2019</div>
<div class="t" style="left:557.5px;top:304px;font-size:13px;letter-spacing:-0.45px;transform:scaleX(0.9816);transform-origin:0.0px 0;">5:36:52 PM</div>
<div class="t" style="left:657.5px;top:304px;font-size:13px;letter-spacing:-0.45px;transform:scaleX(0.9932);transform-origin:0.0px 0;">0.40006</div>
<div class="t" style="left:757.5px;top:304px;font-size:13px;letter-spacing:-0.36px;">11,823,847</div>
<div class="t" style="left:857.5px;top:304px;font-size:13px;letter-spacing:-0.45px;transform:scaleX(0.9489);transform-origin:0.0px 0;">0.08%</div>
<div class="a" style="left:315px;top:323px;width:636px;height:21px;background:#dcffdc"></div>
<div class="t" style="left:317.5px;top:325px;font-size:13px;letter-spacing:-0.45px;transform:scaleX(0.9299);transform-origin:0.0px 0;">ETH/EUR</div>
<div class="t" style="left:437.5px;top:325px;font-size:13px;letter-spacing:-0.01px;">7/8/2019</div>
<div class="t" style="left:557.5px;top:325px;font-size:13px;letter-spacing:-0.45px;transform:scaleX(0.9816);transform-origin:0.0px 0;">5:34:51 PM</div>
<div class="t" style="left:657.5px;top:325px;font-size:13px;letter-spacing:-0.43px;">274.25</div>
<div class="t" style="left:757.5px;top:325px;font-size:13px;letter-spacing:-0.45px;transform:scaleX(0.9851);transform-origin:0.0px 0;">6,687</div>
<div class="t" style="left:857.5px;top:325px;font-size:13px;letter-spacing:-0.45px;transform:scaleX(0.9167);transform-origin:0.0px 0;">3.7%</div>
<div class="a" style="left:315px;top:344px;width:636px;height:21px;background:#dcffdc"></div>
<div class="t" style="left:317.5px;top:346px;font-size:13px;letter-spacing:-0.45px;transform:scaleX(0.9195);transform-origin:0.0px 0;">EOS/USD</div>
<div class="t" style="left:437.5px;top:346px;font-size:13px;letter-spacing:-0.01px;">7/8/2019</div>
<div class="t" style="left:557.5px;top:346px;font-size:13px;letter-spacing:-0.45px;transform:scaleX(0.9816);transform-origin:0.0px 0;">5:36:29 PM</div>
<div class="t" style="left:657.5px;top:346px;font-size:13px;letter-spacing:-0.43px;">5.8937</div>
<div class="t" style="left:757.5px;top:346px;font-size:13px;letter-spacing:-0.43px;">1,060,405</div>
<div class="t" style="left:857.5px;top:346px;font-size:13px;letter-spacing:-0.45px;transform:scaleX(0.9217);transform-origin:0.0px 0;">-2.81%</div>
<div class="a" style="left:315px;top:365px;width:636px;height:21px;background:#ffdcdc"></div>
<div class="t" style="left:317.5px;top:367px;font-size:13px;letter-spacing:-0.45px;transform:scaleX(0.9254);transform-origin:0.0px 0;">XMR/USD</div>
<div class="t" style="left:437.5px;top:367px;font-size:13px;letter-spacing:-0.01px;">7/8/2019</div>
<div class="t" style="left:557.5px;top:367px;font-size:13px;letter-spacing:-0.45px;transform:scaleX(0.9816);transform-origin:0.0px 0;">5:27:16 PM</div>
<div class="t" style="left:657.5px;top:367px;font-size:13px;letter-spacing:-0.43px;">102</div>
<div class="t" style="left:757.5px;top:367px;font-size:13px;letter-spacing:-0.43px;">45,563</div>
<div class="t" style="left:857.5px;top:367px;font-size:13px;letter-spacing:-0.45px;transform:scaleX(0.9217);transform-origin:0.0px 0;">-0.18%</div>
<div class="a" style="left:315px;top:386px;width:636px;height:21px;background:#ffdcdc"></div>
<div class="t" style="left:317.5px;top:388px;font-size:13px;letter-spacing:-0.45px;transform:scaleX(0.9307);transform-origin:0.0px 0;">NEO/USD</div>
<div class="t" style="left:437.5px;top:388px;font-size:13px;letter-spacing:-0.01px;">7/8/2019</div>
<div class="t" style="left:557.5px;top:388px;font-size:13px;letter-spacing:-0.45px;transform:scaleX(0.9816);transform-origin:0.0px 0;">5:33:50 PM</div>
<div class="t" style="left:657.5px;top:388px;font-size:13px;letter-spacing:-0.43px;">17.379</div>
<div class="t" style="left:757.5px;top:388px;font-size:13px;letter-spacing:-0.17px;">115,006</div>
<div class="t" style="left:857.5px;top:388px;font-size:13px;letter-spacing:-0.45px;transform:scaleX(0.9482);transform-origin:0.0px 0;">2.03%</div>
<div class="pan" style="left:284px;top:553px;width:1077px;height:146px"></div>
<div class="tab" style="left:380px;top:531px;width:83px;height:23px"></div>
<div class="tab" style="left:462px;top:531px;width:76px;height:23px"></div>
<div class="tab" style="left:537px;top:531px;width:76px;height:23px"></div>
<div class="tab" style="left:612px;top:531px;width:72px;height:23px"></div>
<div class="tabA" style="left:284px;top:529px;width:97px;height:25px"></div>
<svg class="a" style="left:292px;top:531px" width="17" height="17" viewBox="0 0 17 17"><defs><linearGradient id="ge" x1="0" y1="0" x2="0" y2="1"><stop offset="0" stop-color="#d8e8fa"/><stop offset="1" stop-color="#a8c8ee"/></linearGradient><linearGradient id="gy" x1="0" y1="0" x2="0" y2="1"><stop offset="0" stop-color="#ffd020"/><stop offset="1" stop-color="#f0a000"/></linearGradient></defs><path d="M0.5 7.5Q1 2.5 5 1.5H12Q16 2.5 16.5 7.5V16H0.5Z" fill="url(#ge)" stroke="#8aaad8" stroke-width="0.8"/><path d="M2.5 8L8.5 3.5L14.5 8L8.5 11Z" fill="url(#gy)"/><path d="M0.8 15.5L8.5 9.5L16.2 15.5" fill="none" stroke="#f4f8ff" stroke-width="1"/><path d="M0.5 16h16" stroke="#2a7ad0" stroke-width="1.2"/></svg>
<div class="t" style="left:314.4px;top:532px;font-size:13px;letter-spacing:-0.27px;">Messages</div>
<svg class="a" style="left:384px;top:533px" width="18" height="17" viewBox="0 0 18 17"><defs><linearGradient id="gb" x1="0" y1="0" x2="0" y2="1"><stop offset="0" stop-color="#e8823a"/><stop offset="1" stop-color="#9c3e10"/></linearGradient></defs><path d="M6 4.5V1.5h6v3" stroke="#5a2a10" stroke-width="1.3" fill="none"/><rect x="1" y="4.5" width="16" height="11.5" rx="2.2" fill="url(#gb)" stroke="#7a3010" stroke-width="0.8"/><path d="M1.5 9.5h15" stroke="#8a3a12" stroke-width="0.9"/><rect x="7.5" y="8.3" width="3" height="3" fill="#4a6a78" stroke="#223" stroke-width="0.5"/></svg>
<div class="t" style="left:407.4px;top:534px;font-size:13px;letter-spacing:0.12px;">Portfolio</div>
<svg class="a" style="left:470px;top:534px" width="13" height="15" viewBox="0 0 13 15"><defs><radialGradient id="gsp" cx="0.4" cy="0.35" r="0.7"><stop offset="0" stop-color="#fff4a0"/><stop offset="1" stop-color="#c09010"/></radialGradient></defs><path d="M1 5h3L9 1.5Q12 7.5 9 13.5L4 10H1z" fill="url(#gsp)" stroke="#6a5010" stroke-width="0.9"/><path d="M6.5 4.5v6" stroke="#222" stroke-width="1.4"/><path d="M8.5 6.5h2" stroke="#222" stroke-width="1.2"/></svg>
<div class="t" style="left:491.3px;top:534px;font-size:13px;letter-spacing:-0.45px;transform:scaleX(0.9851);transform-origin:0.0px 0;">Signals</div>
<svg class="a" style="left:545px;top:533px" width="16" height="16" viewBox="0 0 16 16"><defs><linearGradient id="gn" x1="0" y1="0" x2="1" y2="1"><stop offset="0" stop-color="#fff8b0"/><stop offset="1" stop-color="#d8b820"/></linearGradient></defs><rect x="0.5" y="3.5" width="13" height="11" fill="url(#gn)" stroke="#6a5a10" stroke-width="0.8"/><path d="M1.5 15.2h13.2V4.5" stroke="#111" stroke-width="1.6" fill="none"/><path d="M4.5 10.5L13 2" stroke="#303030" stroke-width="2.2"/><path d="M12 3L14 1" stroke="#e03030" stroke-width="2.4"/><path d="M3 12.5h6" stroke="#222" stroke-width="1"/><circle cx="12" cy="12.5" r="1" fill="#c04020"/></svg>
<div class="t" style="left:566.0px;top:534px;font-size:13px;letter-spacing:0.14px;">Orders</div>
<svg class="a" style="left:620px;top:534px" width="14" height="15" viewBox="0 0 14 15"><defs><linearGradient id="gc" x1="0" y1="0" x2="1" y2="1"><stop offset="0" stop-color="#ffffff"/><stop offset="1" stop-color="#b8cce8"/></linearGradient></defs><rect x="0.5" y="2.5" width="12" height="12" rx="1" fill="url(#gc)" stroke="#4a5a78" stroke-width="0.8"/><rect x="3.5" y="0.5" width="6" height="3.5" rx="1" fill="#e8c850" stroke="#806010" stroke-width="0.6"/><path d="M2.5 8.5L5.5 12L11.5 4.5" stroke="#e82010" stroke-width="2" fill="none"/></svg>
<div class="t" style="left:641.0px;top:534px;font-size:13px;letter-spacing:-0.26px;">Trades</div>
<div class="grid" style="left:291px;top:559px;width:1065px;height:133px"></div>
<div class="a" style="left:492px;top:562px;width:1px;height:23px;background:#e5e5e5"></div>
<div class="a" style="left:1073px;top:562px;width:1px;height:23px;background:#e5e5e5"></div>
<div class="t" style="left:299.0px;top:564px;font-size:13px;letter-spacing:-0.45px;transform:scaleX(0.9831);transform-origin:0.0px 0;">Time</div>
<div class="t" style="left:499.5px;top:564px;font-size:13px;letter-spacing:-0.14px;">Description</div>
<svg class="a" style="left:298px;top:587px" width="15" height="15" viewBox="0 0 15 15"><defs><radialGradient id="gi" cx="0.4" cy="0.3" r="0.8"><stop offset="0" stop-color="#cfe0fa"/><stop offset="1" stop-color="#4a7ad0"/></radialGradient></defs><circle cx="7.5" cy="7.5" r="7" fill="url(#gi)" stroke="#5a80c0" stroke-width="0.8"/><rect x="6.6" y="6" width="1.8" height="6" fill="#fff"/><rect x="6.6" y="3" width="1.8" height="1.8" fill="#fff"/></svg>
<div class="t" style="left:315.4px;top:587px;font-size:13px;letter-spacing:-0.11px;">7/8/2019 8:13:04 PM</div>
<div class="t" style="left:499.2px;top:587px;font-size:13px;letter-spacing:-0.17px;">Checking connection availability…</div>
<svg class="a" style="left:298px;top:608px" width="15" height="15" viewBox="0 0 15 15"><defs><radialGradient id="gi" cx="0.4" cy="0.3" r="0.8"><stop offset="0" stop-color="#cfe0fa"/><stop offset="1" stop-color="#4a7ad0"/></radialGradient></defs><circle cx="7.5" cy="7.5" r="7" fill="url(#gi)" stroke="#5a80c0" stroke-width="0.8"/><rect x="6.6" y="6" width="1.8" height="6" fill="#fff"/><rect x="6.6" y="3" width="1.8" height="1.8" fill="#fff"/></svg>
<div class="t" style="left:315.4px;top:608px;font-size:13px;letter-spacing:-0.11px;">7/8/2019 8:13:04 PM</div>
<div class="t" style="left:499.2px;top:608px;font-size:13px;letter-spacing:-0.03px;">Getting the list of available instruments…</div>
<svg class="a" style="left:298px;top:629px" width="15" height="15" viewBox="0 0 15 15"><defs><radialGradient id="gi" cx="0.4" cy="0.3" r="0.8"><stop offset="0" stop-color="#cfe0fa"/><stop offset="1" stop-color="#4a7ad0"/></radialGradient></defs><circle cx="7.5" cy="7.5" r="7" fill="url(#gi)" stroke="#5a80c0" stroke-width="0.8"/><rect x="6.6" y="6" width="1.8" height="6" fill="#fff"/><rect x="6.6" y="3" width="1.8" height="1.8" fill="#fff"/></svg>
<div class="t" style="left:315.4px;top:629px;font-size:13px;letter-spacing:-0.11px;">7/8/2019 8:13:06 PM</div>
<div class="t" style="left:499.2px;top:629px;font-size:13px;letter-spacing:0.11px;">Connected to the broker</div>
<svg class="a" style="left:298px;top:650px" width="15" height="15" viewBox="0 0 15 15"><defs><radialGradient id="gi" cx="0.4" cy="0.3" r="0.8"><stop offset="0" stop-color="#cfe0fa"/><stop offset="1" stop-color="#4a7ad0"/></radialGradient></defs><circle cx="7.5" cy="7.5" r="7" fill="url(#gi)" stroke="#5a80c0" stroke-width="0.8"/><rect x="6.6" y="6" width="1.8" height="6" fill="#fff"/><rect x="6.6" y="3" width="1.8" height="1.8" fill="#fff"/></svg>
<div class="t" style="left:315.4px;top:650px;font-size:13px;letter-spacing:-0.11px;">7/8/2019 8:13:06 PM</div>
<div class="t" style="left:499.2px;top:650px;font-size:13px;letter-spacing:0.05px;">Trading instruments loaded: 407</div>
<svg class="a" style="left:298px;top:671px" width="15" height="15" viewBox="0 0 15 15"><defs><radialGradient id="gi" cx="0.4" cy="0.3" r="0.8"><stop offset="0" stop-color="#cfe0fa"/><stop offset="1" stop-color="#4a7ad0"/></radialGradient></defs><circle cx="7.5" cy="7.5" r="7" fill="url(#gi)" stroke="#5a80c0" stroke-width="0.8"/><rect x="6.6" y="6" width="1.8" height="6" fill="#fff"/><rect x="6.6" y="3" width="1.8" height="1.8" fill="#fff"/></svg>
<div class="t" style="left:315.4px;top:671px;font-size:13px;letter-spacing:-0.11px;">7/8/2019 8:13:18 PM</div>
<div class="t" style="left:499.2px;top:671px;font-size:13px;letter-spacing:0.18px;">Data from the broker has been downloaded</div>
<div class="a" style="left:1338px;top:561px;width:15px;height:128px;background:#f0f0f0"></div>
<div class="a" style="left:1338px;top:656px;width:15px;height:17px;background:#cdcdcd"></div>
<svg class="a" style="left:1341px;top:566px" width="10" height="6" viewBox="0 0 10 6"><path d="M1 5L5 1L9 5" stroke="#606060" stroke-width="1.8" fill="none"/></svg>
<svg class="a" style="left:1341px;top:678px" width="10" height="6" viewBox="0 0 10 6"><path d="M1 1L5 5L9 1" stroke="#606060" stroke-width="1.8" fill="none"/></svg>
<div class="a" style="left:0px;top:704px;width:1366px;height:1px;background:#dadada"></div>
<div class="t" style="left:5.5px;top:707px;font-size:14px;letter-spacing:0.00px;">Connected to the broker.</div>
<svg class="a" style="left:1185px;top:708px" width="16" height="16" viewBox="0 0 16 16"><circle cx="7.5" cy="5" r="4.5" fill="#2a7ad0"/><path d="M4 3q2 -1 3 1t3 1" stroke="#40b040" stroke-width="2" fill="none"/><path d="M7.5 9.5v3" stroke="#333" stroke-width="1.2"/><rect x="5" y="11.5" width="5" height="4" fill="#f0d040" stroke="#806010" stroke-width="0.6"/><path d="M0.5 14.5h4M10.5 14.5h5" stroke="#222" stroke-width="1.4"/></svg>
<div class="t" style="left:1205.0px;top:707px;font-size:14px;letter-spacing:-0.19px;">Connection: connected</div>
<div class="a" style="left:353px;top:173px;width:100px;height:3px;background:linear-gradient(rgba(0,0,0,0.28),rgba(0,0,0,0.05))"></div>
<div class="a" style="left:451px;top:157px;width:2px;height:17px;background:linear-gradient(90deg,rgba(0,0,0,0.28),rgba(0,0,0,0.05))"></div>
<div class="a" style="left:350px;top:154px;width:101px;height:20px;background:#fff;border:1px solid #767676"></div>
<div class="t" style="left:356.9px;top:153px;font-size:12px;letter-spacing:0.05px;color:#575757">Instrument chart</div>
</body></html>
